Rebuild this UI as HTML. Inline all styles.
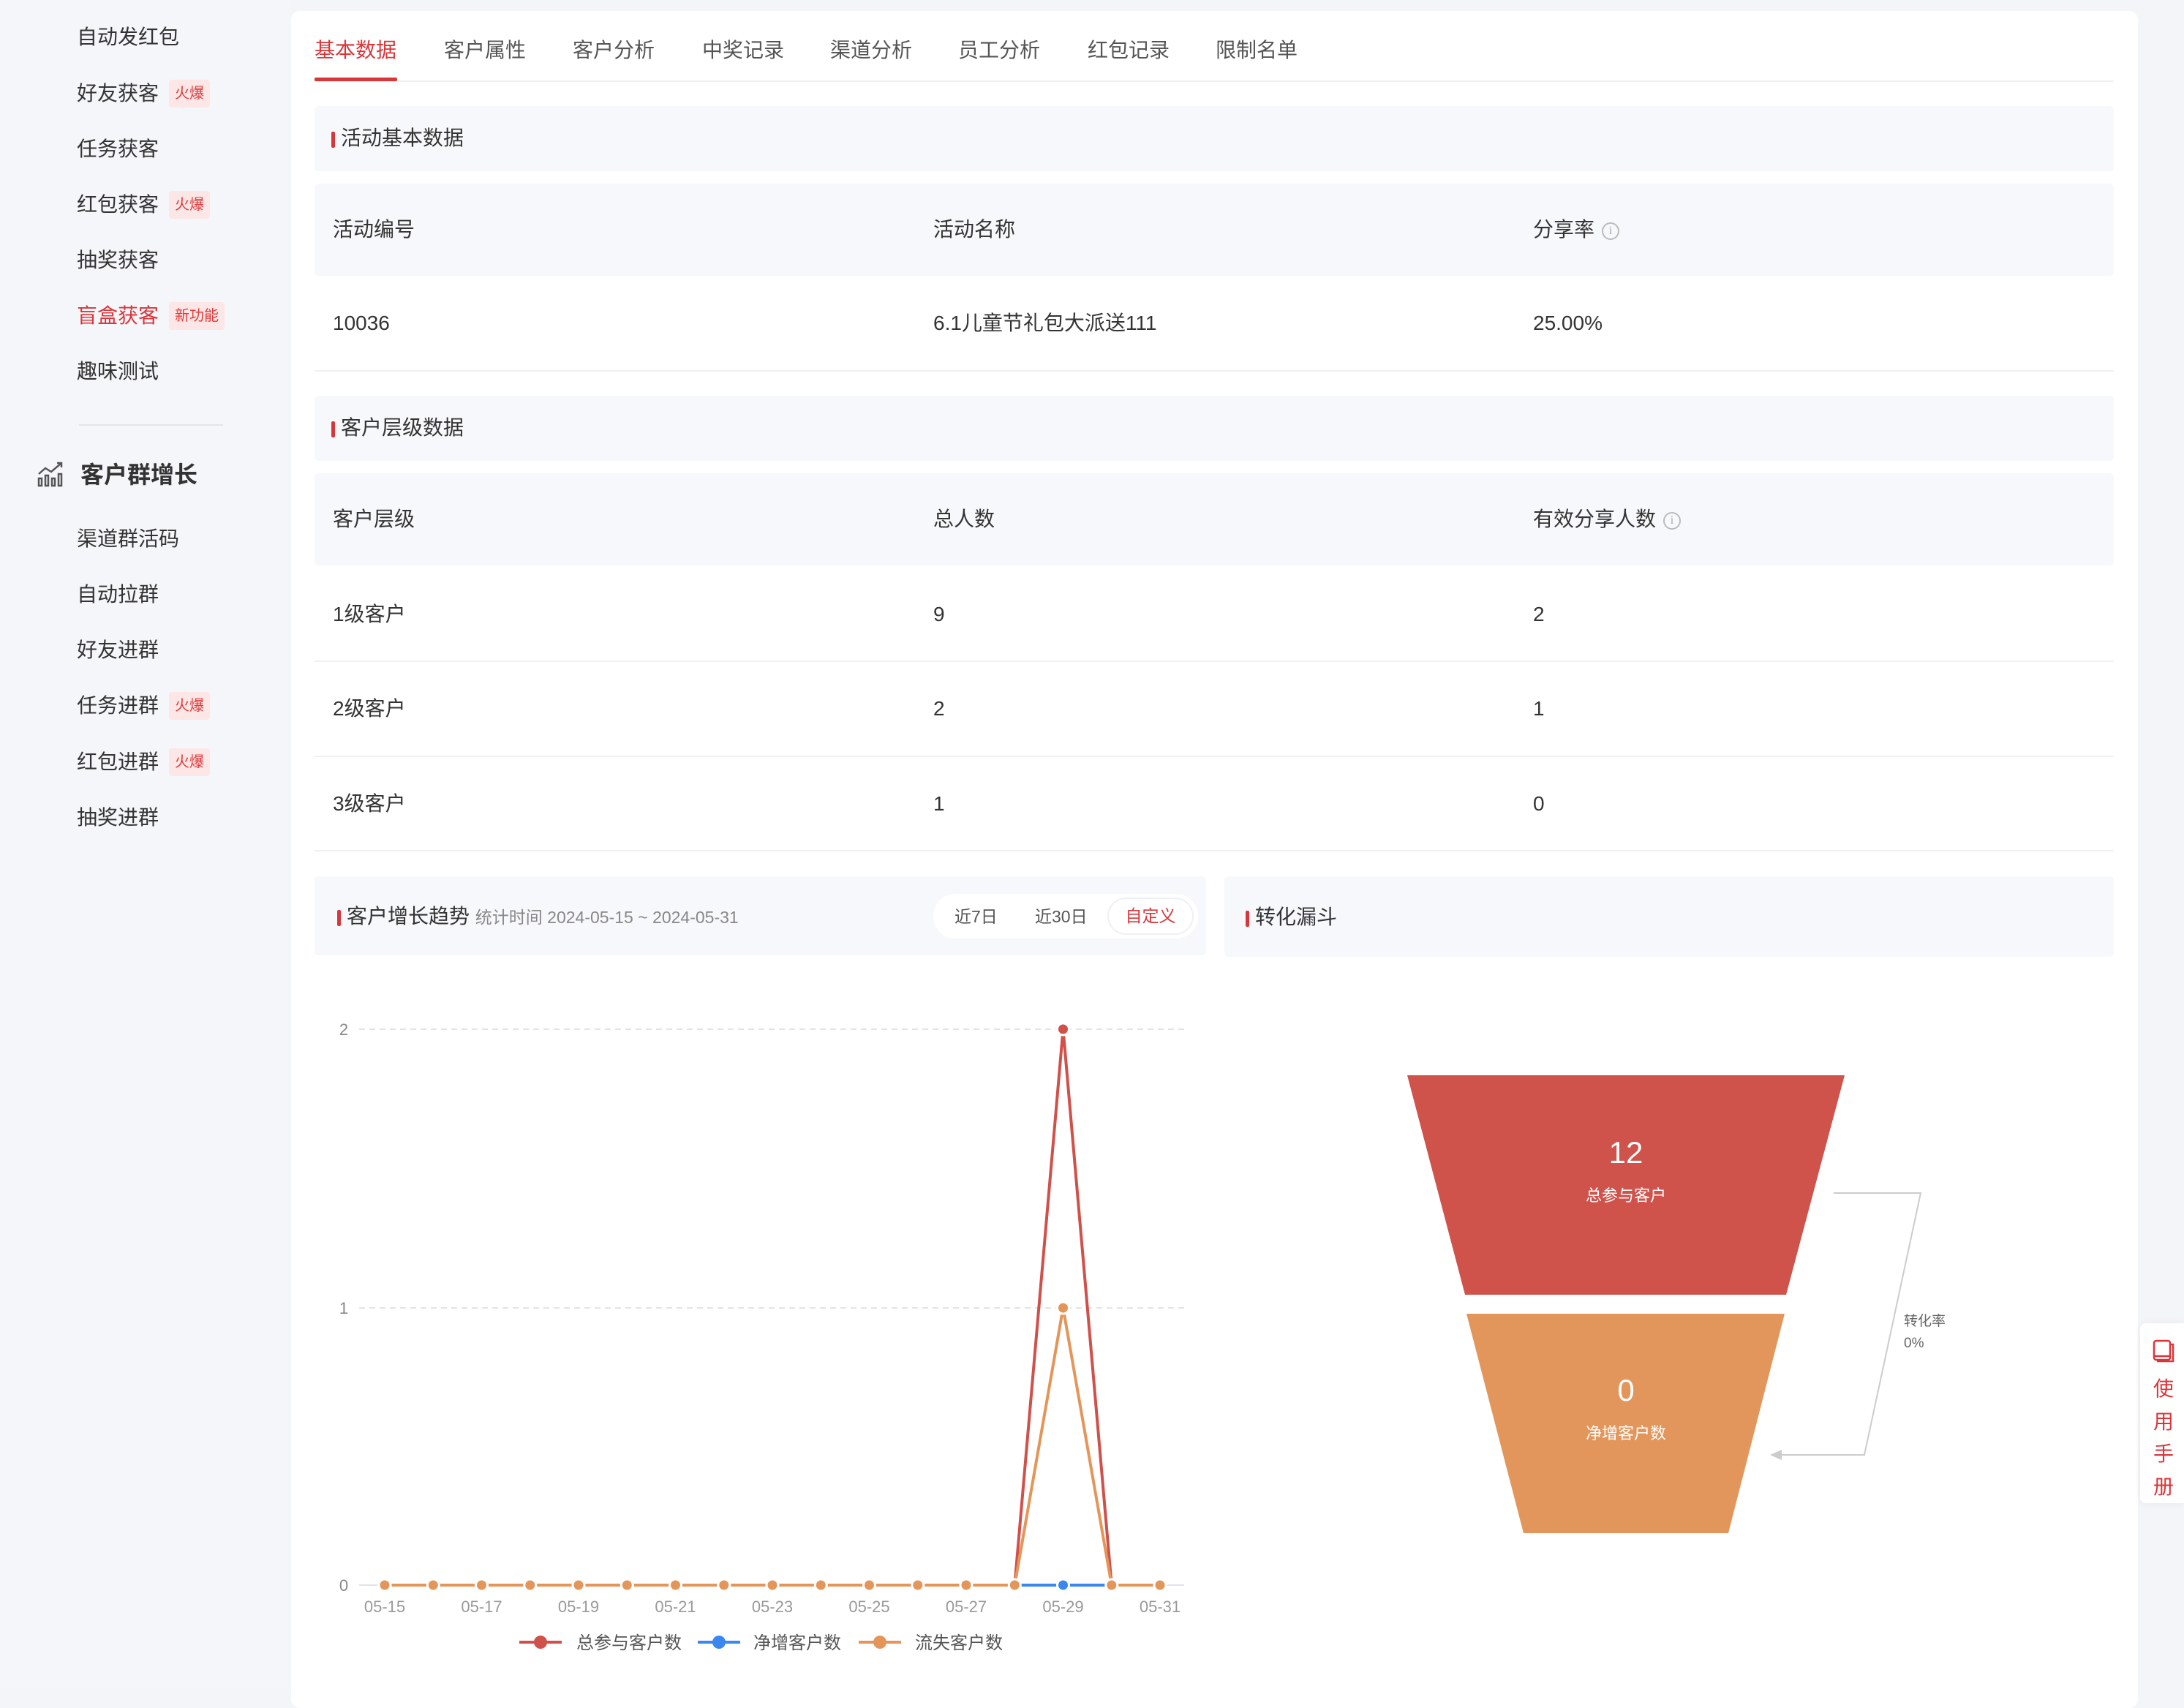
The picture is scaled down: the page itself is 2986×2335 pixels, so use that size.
<!DOCTYPE html>
<html><head><meta charset="utf-8"><style>
*{margin:0;padding:0;box-sizing:border-box}
body{width:2986px;height:2309px;background:#f4f5f9;font-family:"Liberation Sans","Noto Sans CJK SC",sans-serif;color:#333;position:relative;overflow:hidden}
.a{position:absolute;white-space:nowrap}
.si{position:absolute;left:105px;font-size:28px;color:#333;line-height:38px}
.bd{display:inline-block;margin-left:14px;background:#fde6e6;color:#e03b3b;font-size:20px;line-height:38px;height:38px;padding:0 8px;border-radius:4px;vertical-align:top}
.card{position:absolute;left:398px;top:15px;width:2525px;height:2320px;background:#fff;border-radius:12px}
.tab{position:absolute;top:50px;font-size:28px;color:#555;line-height:38px}
.hd{position:absolute;background:#f7f8fb;border-radius:6px}
.ttl{position:absolute;font-size:28px;color:#333;line-height:38px}
.ttl:before{content:"";position:absolute;left:-13px;top:10px;width:5px;height:22px;background:#d9363a;border-radius:2px}
.tx{position:absolute;font-size:28px;color:#333;line-height:38px}
.ln{position:absolute;left:430px;width:2460px;height:2px;background:#eef0f3}
.info{display:inline-block;width:24px;height:24px;border:2px solid #bbb;border-radius:50%;color:#aaa;font-size:16px;line-height:20px;text-align:center;margin-left:10px;vertical-align:middle;font-family:"Liberation Serif",serif}
</style></head><body>
<div style="position:absolute;left:0;top:0;width:398px;height:2309px;background:#f5f6fa"></div>
<div class="si" style="top:32px">自动发红包</div>
<div class="si" style="top:109px">好友获客<span class="bd">火爆</span></div>
<div class="si" style="top:185px">任务获客</div>
<div class="si" style="top:261px">红包获客<span class="bd">火爆</span></div>
<div class="si" style="top:337px">抽奖获客</div>
<div class="si" style="top:413px;color:#d9363a">盲盒获客<span class="bd">新功能</span></div>
<div class="si" style="top:489px">趣味测试</div>
<div class="a" style="left:108px;top:580px;width:197px;height:2px;background:#e3e5ea"></div>
<svg class="a" style="left:50px;top:630px" width="40" height="36" viewBox="0 0 40 36" fill="none" stroke="#555" stroke-width="2.5"><path d="M3 18 L12 10 L20 15 L34 3 M28 3 H34 V9"/><rect x="3" y="24" width="4" height="10"/><rect x="12" y="20" width="4" height="14"/><rect x="21" y="24" width="4" height="10"/><rect x="30" y="18" width="4" height="16"/></svg>
<div class="a" style="left:110px;top:628px;font-size:32px;font-weight:bold;color:#333;line-height:42px">客户群增长</div>
<div class="si" style="top:718px">渠道群活码</div>
<div class="si" style="top:794px">自动拉群</div>
<div class="si" style="top:870px">好友进群</div>
<div class="si" style="top:946px">任务进群<span class="bd">火爆</span></div>
<div class="si" style="top:1023px">红包进群<span class="bd">火爆</span></div>
<div class="si" style="top:1099px">抽奖进群</div>

<div class="card"></div>
<div class="tab" style="left:430px;color:#d9363a">基本数据</div>
<div class="tab" style="left:607px">客户属性</div>
<div class="tab" style="left:783px">客户分析</div>
<div class="tab" style="left:960px">中奖记录</div>
<div class="tab" style="left:1135px">渠道分析</div>
<div class="tab" style="left:1310px">员工分析</div>
<div class="tab" style="left:1487px">红包记录</div>
<div class="tab" style="left:1662px">限制名单</div>
<div class="a" style="left:430px;top:110px;width:2460px;height:2px;background:#eef0f3"></div>
<div class="a" style="left:430px;top:106px;width:113px;height:5px;background:#d9363a;border-radius:2px"></div>

<div class="hd" style="left:430px;top:145px;width:2460px;height:89px"></div>
<div class="ttl" style="left:466px;top:170px">活动基本数据</div>
<div class="hd" style="left:430px;top:251px;width:2460px;height:126px"></div>
<div class="tx" style="left:455px;top:295px">活动编号</div>
<div class="tx" style="left:1276px;top:295px">活动名称</div>
<div class="tx" style="left:2096px;top:295px">分享率<span class="info">i</span></div>
<div class="tx" style="left:455px;top:423px">10036</div>
<div class="tx" style="left:1276px;top:423px">6.1儿童节礼包大派送111</div>
<div class="tx" style="left:2096px;top:423px">25.00%</div>
<div class="ln" style="top:506px"></div>

<div class="hd" style="left:430px;top:541px;width:2460px;height:89px"></div>
<div class="ttl" style="left:466px;top:566px">客户层级数据</div>
<div class="hd" style="left:430px;top:647px;width:2460px;height:126px"></div>
<div class="tx" style="left:455px;top:691px">客户层级</div>
<div class="tx" style="left:1276px;top:691px">总人数</div>
<div class="tx" style="left:2096px;top:691px">有效分享人数<span class="info">i</span></div>
<div class="tx" style="left:455px;top:821px">1级客户</div><div class="tx" style="left:1276px;top:821px">9</div><div class="tx" style="left:2096px;top:821px">2</div>
<div class="ln" style="top:903px"></div>
<div class="tx" style="left:455px;top:950px">2级客户</div><div class="tx" style="left:1276px;top:950px">2</div><div class="tx" style="left:2096px;top:950px">1</div>
<div class="ln" style="top:1033px"></div>
<div class="tx" style="left:455px;top:1080px">3级客户</div><div class="tx" style="left:1276px;top:1080px">1</div><div class="tx" style="left:2096px;top:1080px">0</div>
<div class="ln" style="top:1162px"></div>

<div class="hd" style="left:430px;top:1198px;width:1219px;height:108px"></div>
<div class="ttl" style="left:474px;top:1234px">客户增长趋势 <span style="font-size:23px;color:#888">统计时间 2024-05-15 ~ 2024-05-31</span></div>
<div class="a" style="left:1276px;top:1222px;width:362px;height:61px;background:#fff;border-radius:30px"></div>
<div class="a" style="left:1305px;top:1236px;font-size:23px;color:#555;line-height:34px">近7日</div>
<div class="a" style="left:1415px;top:1236px;font-size:23px;color:#555;line-height:34px">近30日</div>
<div class="a" style="left:1514px;top:1227px;width:118px;height:51px;border:2px solid #eef0f3;border-radius:26px;font-size:23px;color:#d9363a;line-height:47px;text-align:center">自定义</div>

<div class="hd" style="left:1674px;top:1198px;width:1216px;height:110px"></div>
<div class="ttl" style="left:1716px;top:1235px">转化漏斗</div>

<svg class="a" style="left:0;top:0" width="2986" height="2309">
<g font-family="Liberation Sans" font-size="22" fill="#888">
<text x="470" y="1415" text-anchor="middle">2</text>
<text x="470" y="1796" text-anchor="middle">1</text>
<text x="470" y="2175" text-anchor="middle">0</text>
</g>
<g stroke="#e2e4e8" stroke-width="2" stroke-dasharray="8 6"><line x1="491" y1="1407" x2="1619" y2="1407"/><line x1="491" y1="1788" x2="1619" y2="1788"/></g>
<line x1="491" y1="2167" x2="1619" y2="2167" stroke="#e2e4e8" stroke-width="2"/>
<g font-family="Liberation Sans" font-size="22" fill="#999" text-anchor="middle">
<text x="526" y="2204">05-15</text><text x="658.5" y="2204">05-17</text><text x="791" y="2204">05-19</text><text x="923.5" y="2204">05-21</text><text x="1056" y="2204">05-23</text><text x="1188.5" y="2204">05-25</text><text x="1321" y="2204">05-27</text><text x="1453.5" y="2204">05-29</text><text x="1586" y="2204">05-31</text>
</g>
<polyline points="1387.3,2167 1453.5,1407 1519.8,2167" fill="none" stroke="#d0504a" stroke-width="4"/>
<polyline points="1387.3,2167 1453.5,1788 1519.8,2167" fill="none" stroke="#e4965a" stroke-width="4"/>
<line x1="1387" y1="2167" x2="1520" y2="2167" stroke="#3a87f0" stroke-width="4"/>
<line x1="526" y1="2167" x2="1387" y2="2167" stroke="#e4965a" stroke-width="4"/>
<line x1="1520" y1="2167" x2="1586" y2="2167" stroke="#e4965a" stroke-width="4"/>
<g fill="#e4965a" stroke="#fff" stroke-width="3">
<circle cx="526" cy="2167" r="8"/><circle cx="592.3" cy="2167" r="8"/><circle cx="658.5" cy="2167" r="8"/><circle cx="724.8" cy="2167" r="8"/><circle cx="791" cy="2167" r="8"/><circle cx="857.3" cy="2167" r="8"/><circle cx="923.5" cy="2167" r="8"/><circle cx="989.8" cy="2167" r="8"/><circle cx="1056" cy="2167" r="8"/><circle cx="1122.3" cy="2167" r="8"/><circle cx="1188.5" cy="2167" r="8"/><circle cx="1254.8" cy="2167" r="8"/><circle cx="1321" cy="2167" r="8"/><circle cx="1387.3" cy="2167" r="8"/><circle cx="1519.8" cy="2167" r="8"/><circle cx="1586" cy="2167" r="8"/><circle cx="1453.5" cy="1788" r="8"/>
</g>
<circle cx="1453.5" cy="2167" r="8" fill="#3a87f0" stroke="#fff" stroke-width="3"/>
<circle cx="1453.5" cy="1407" r="8" fill="#d0504a" stroke="#fff" stroke-width="3"/>
<g stroke-width="4"><line x1="710" y1="2245" x2="768" y2="2245" stroke="#d0504a"/><circle cx="739" cy="2245" r="9" fill="#d0504a"/>
<line x1="954" y1="2245" x2="1012" y2="2245" stroke="#3a87f0"/><circle cx="983" cy="2245" r="9" fill="#3a87f0"/>
<line x1="1174" y1="2245" x2="1232" y2="2245" stroke="#e4965a"/><circle cx="1203" cy="2245" r="9" fill="#e4965a"/></g>
<g font-family="Liberation Sans,Noto Sans CJK SC" font-size="24" fill="#555"><text x="788" y="2254">总参与客户数</text><text x="1030" y="2254">净增客户数</text><text x="1251" y="2254">流失客户数</text></g>
<path d="M1924 1470 L2522 1470 L2442 1770 L2003 1770 Z" fill="#cf524b"/>
<path d="M2005 1796 L2440 1796 L2363 2096 L2083 2096 Z" fill="#e3965b"/>
<g font-family="Liberation Sans,Noto Sans CJK SC" fill="#fff" text-anchor="middle">
<text x="2223" y="1590" font-size="42">12</text><text x="2223" y="1642" font-size="22">总参与客户</text>
<text x="2223" y="1915" font-size="42">0</text><text x="2223" y="1967" font-size="22">净增客户数</text></g>
<polyline points="2507,1631 2626,1631 2549,1989 2430,1989" fill="none" stroke="#ccc" stroke-width="2"/>
<path d="M2420 1989 L2436 1982 L2436 1996 Z" fill="#ccc"/>
<g font-family="Liberation Sans,Noto Sans CJK SC" font-size="19" fill="#666"><text x="2603" y="1812">转化率</text><text x="2603" y="1842">0%</text></g>
</svg>

<div class="a" style="left:2923px;top:0;width:63px;height:2309px;background:#f4f5f9"></div>
<div class="a" style="left:2926px;top:1809px;width:62px;height:246px;background:#fff;border-radius:8px 0 0 8px;box-shadow:0 0 12px rgba(0,0,0,0.06)"></div>
<svg class="a" style="left:2942px;top:1830px" width="32" height="34" viewBox="0 0 32 34" fill="none" stroke="#d9363a" stroke-width="2.5"><rect x="3" y="3" width="22" height="26" rx="3"/><path d="M25 8 H29 V31 H7"/><path d="M3 24 H25"/></svg>
<div class="a" style="left:2943px;top:1877px;width:30px;font-size:28px;line-height:44.5px;color:#d9363a;white-space:normal;text-align:center">使用手册</div>
</body></html>
